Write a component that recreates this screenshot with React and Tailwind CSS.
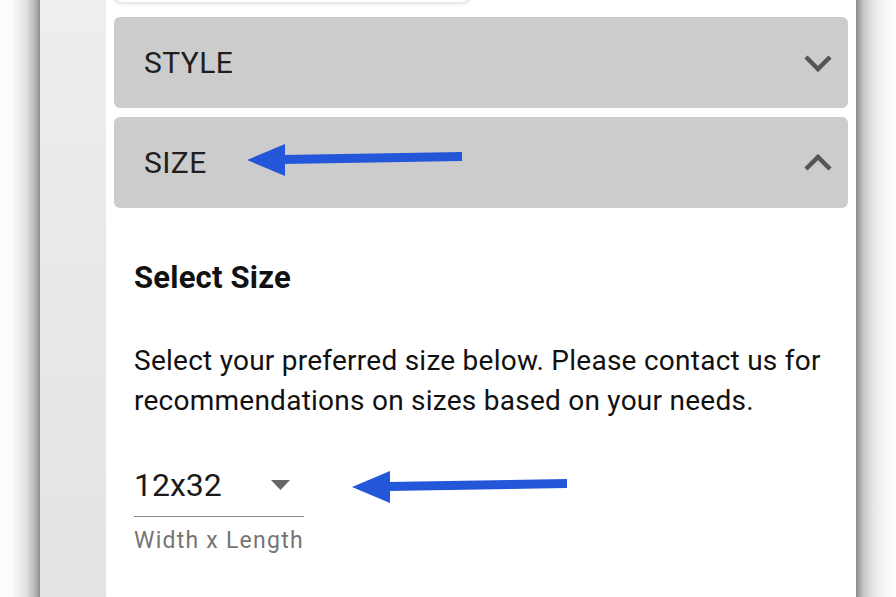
import React from 'react';

function Chevron({ up }) {
  return (
    <svg width="28" height="18" viewBox="0 0 28 18" className="text-[#555555]">
      <polyline
        points={up ? '2,15 14,3 26,15' : '2,3 14,15 26,3'}
        fill="none"
        stroke="currentColor"
        strokeWidth="4.5"
      />
    </svg>
  );
}

function Arrow({ width = 216 }) {
  // annotation arrow pointing left
  return (
    <svg width={width} height="34" viewBox={`0 0 ${width} 34`}>
      <polygon points="0,17 38,1 38,33" fill="#2356d9" />
      <polygon points={`36,12 ${width},9 ${width},18 36,21`} fill="#2356d9" />
    </svg>
  );
}

function AccordionHeader({ label, open, children }) {
  return (
    <div className="relative flex items-center justify-between h-[91px] rounded-md bg-[#cccccc] pl-[30px] pr-[16px]">
      <span className="text-[30px] tracking-[0.4px] text-[#1e1e1e]">{label}</span>
      {children}
      <Chevron up={open} />
    </div>
  );
}

export default function App() {
  return (
    <div className="flex h-[597px] w-[896px] overflow-hidden bg-white font-['Roboto',sans-serif]">
      {/* window shadow left */}
      <div className="w-[40px] bg-[linear-gradient(to_right,#ffffff_0%,#fbfbfb_30%,#e2e2e2_65%,#b5b5b5_88%,#8e8e8e_100%)]" />
      <div className="w-[66px] bg-[linear-gradient(to_bottom,#eeeeee,#e3e3e3)]" />

      {/* panel */}
      <div className="flex-1 bg-white px-[8px]">
        <div className="-mt-[30px] h-[32px] w-[356px] rounded-lg bg-white shadow-[0_1px_4px_rgba(0,0,0,0.18)]" />

        <div className="mt-[15px] flex flex-col gap-[9px]">
          <AccordionHeader label="STYLE" />
          <AccordionHeader label="SIZE" open>
            <div className="absolute left-[133px] top-[26px]">
              <Arrow width={215} />
            </div>
          </AccordionHeader>
        </div>

        <div className="px-[20px] pt-[52px]">
          <h2 className="text-[31px] font-bold leading-[36px] tracking-[0.2px] text-[#111111]">Select Size</h2>
          <p className="mt-[45px] text-[28px] leading-[40px] tracking-[0.25px] text-[#111111]">
            Select your preferred size below. Please contact us for recommendations on sizes based on your needs.
          </p>

          <div className="relative mt-[44px] w-[170px]">
            <div className="flex items-center justify-between border-b-[1.5px] border-[#8a8a8a] pb-[11px]">
              <span className="text-[32px] leading-[40px] text-[#1a1a1a]">12x32</span>
              <svg width="19" height="10" viewBox="0 0 19 10" className="mr-[14px]">
                <polygon points="0,0 19,0 9.5,10" fill="#666666" />
              </svg>
            </div>
            <div className="mt-[10px] whitespace-nowrap text-[23px] leading-[28px] tracking-[1.25px] text-[#757575]">Width x Length</div>
            <div className="absolute left-[218px] top-[5px]">
              <Arrow width={215} />
            </div>
          </div>
        </div>
      </div>

      {/* window shadow right */}
      <div className="w-[40px] bg-[linear-gradient(to_right,#8c8c8c_0%,#c4c4c4_18%,#e8e8e8_45%,#f8f8f8_75%,#ffffff_100%)]" />
    </div>
  );
}
